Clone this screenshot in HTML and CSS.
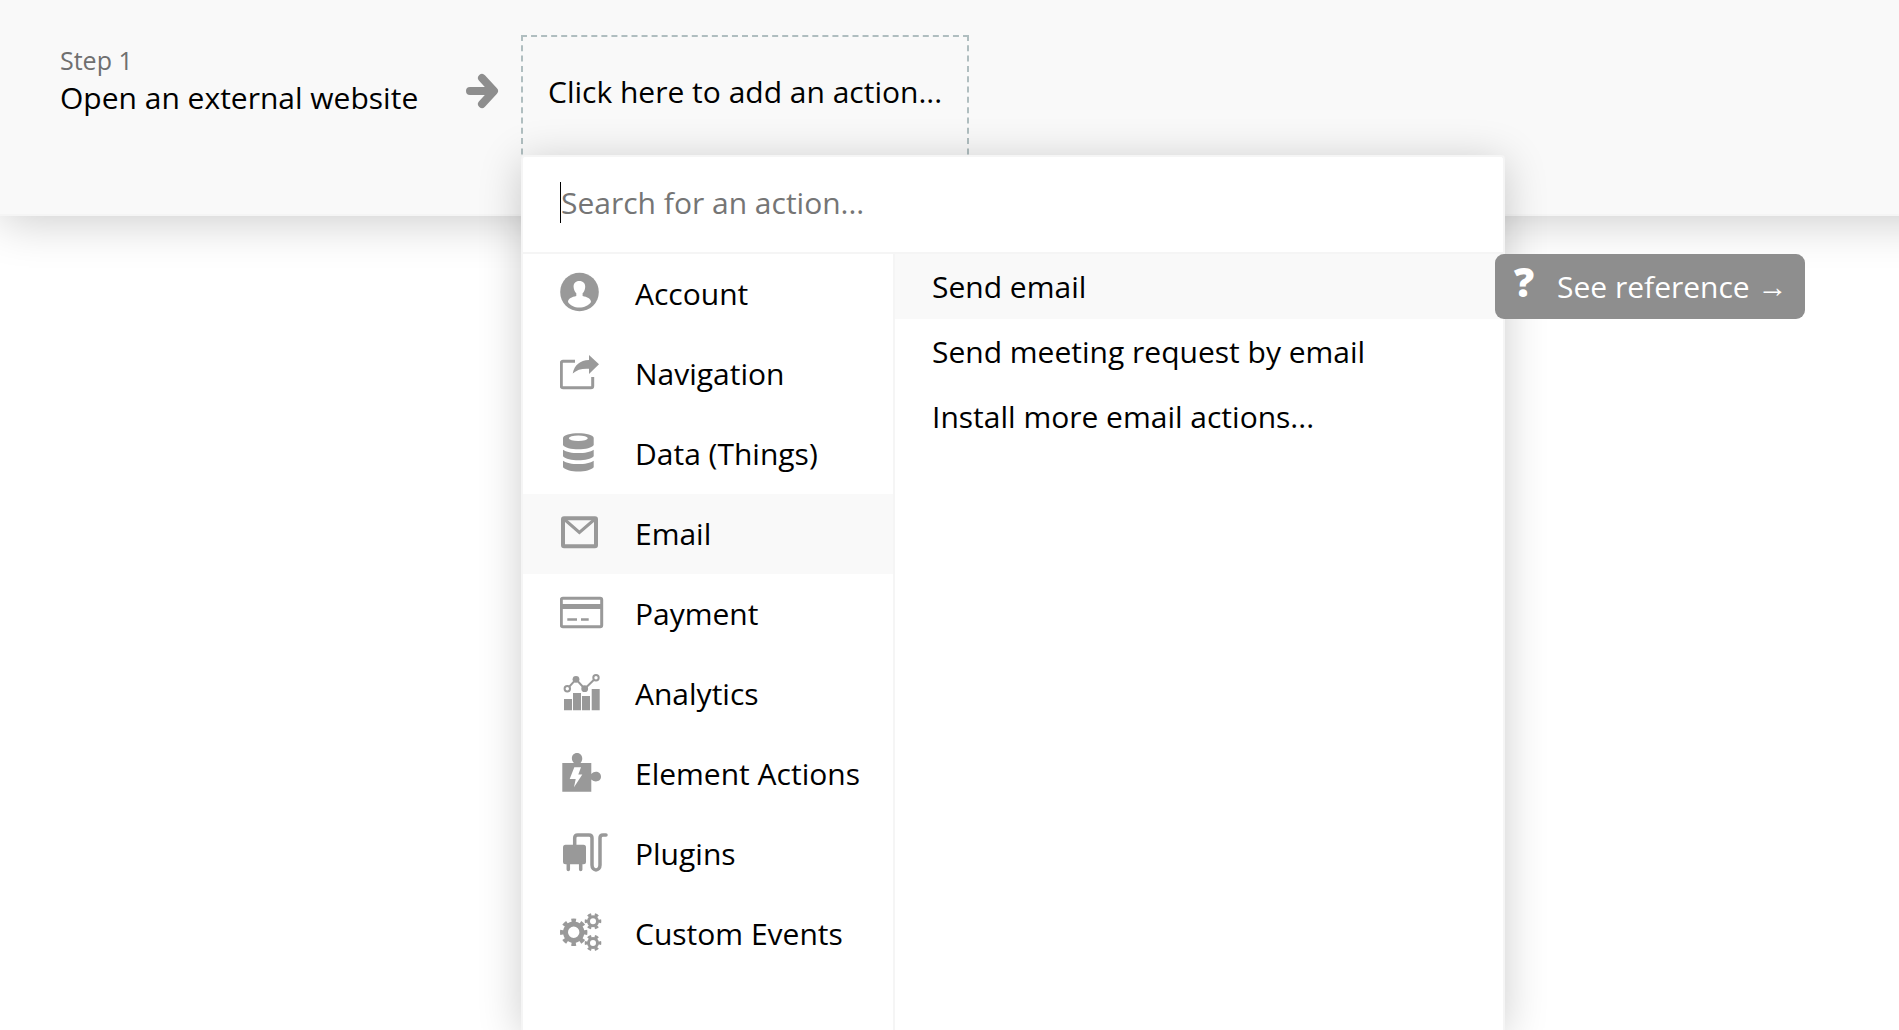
FILE: index.html
```html
<!DOCTYPE html>
<html lang="en">
<head>
    <meta charset="UTF-8">
    <meta name="viewport" content="width=device-width, initial-scale=1.0">
    <title>Workflow</title>
    <link rel="stylesheet" href="styles.css">
</head>
<body>
    <header class="workflow">
        <div class="step">
            <div class="step-number">Step 1</div>
            <div class="step-name">Open an external website</div>
        </div>

        <svg class="step-arrow" viewBox="0 0 34 36">
            <path d="M5 18H27M17 5L29 18L17 31" fill="none" stroke="#8e8e8e" stroke-width="8" stroke-linecap="round" stroke-linejoin="round"/>
        </svg>

        <div class="add-action">
            <button type="button" class="add-button">Click here to add an action...</button>

            <div class="menu">
                <div class="search">
                    <input type="text" class="search-input" aria-label="Search for an action" placeholder="Search for an action...">
                </div>

                <div class="menu-columns">
                    <nav class="categories">
                        <button type="button" class="category">
                            <svg class="icon" viewBox="0 0 48 44">
                                <circle cx="19.5" cy="20" r="19.3"/>
                                <path class="cut" d="M19.3 9C15.5 9 13.4 11.5 13.6 15C13.8 18 15 20 16.3 21.3V24C12 25 8 26.5 8 30C10 33.5 14.5 35.5 19.3 35.5S29 33.5 31 30C31 26.5 27 25 22.6 24V21.3C24 20 25 18 25.2 15C25.4 11.5 23.2 9 19.3 9Z"/>
                            </svg>
                            Account
                        </button>
                        <button type="button" class="category">
                            <svg class="icon" viewBox="0 0 48 44">
                                <path class="line" d="M15 9.3H3Q1.3 9.3 1.3 11V34Q1.3 35.7 3 35.7H31Q32.7 35.7 32.7 34V25"/>
                                <path d="M29 3L39 12.3L29 22V16.7C22 16.3 17 17.5 12.7 21.5C14.5 13 20 8.3 29 8Z"/>
                            </svg>
                            Navigation
                        </button>
                        <button type="button" class="category">
                            <svg class="icon" viewBox="0 0 48 44">
                                <path d="M3 6C3 -.5 33.7 -.5 33.7 6V13C31 18.7 5.7 18.7 3 13Z"/>
                                <ellipse class="cut" cx="18.3" cy="6.2" rx="9.5" ry="2.8"/>
                                <path d="M3 17.7C9 22.2 27.7 22.2 33.7 17.7V24.3C29 29.7 7.7 29.7 3 24.3ZM3 28.7C9 33.2 27.7 33.2 33.7 28.7V35.3C29 41 7.7 41 3 35.3Z"/>
                            </svg>
                            Data (Things)
                        </button>
                        <button type="button" class="category active">
                            <svg class="icon" viewBox="0 0 48 44">
                                <rect class="line thick" x="3" y="6.2" width="33" height="28" rx="1"/>
                                <path class="line" d="M4 7L19.4 20.5L35 7"/>
                            </svg>
                            Email
                        </button>
                        <button type="button" class="category">
                            <svg class="icon" viewBox="0 0 48 44">
                                <rect class="line" x="1.3" y="6.3" width="40.4" height="28.4" rx="1.5"/>
                                <path d="M1 12H42V17H1ZM7.3 26.2H17V28.8H7.3ZM21 26.2H28.7V28.8H21Z"/>
                            </svg>
                            Payment
                        </button>
                        <button type="button" class="category">
                            <svg class="icon" viewBox="0 0 48 44">
                                <path d="M4 27H12V38.3H4ZM13 21H21V38.3H13ZM22 24H30V38.3H22ZM31.7 17H39.7V38.3H31.7Z"/>
                                <circle class="line thin" cx="7.3" cy="16.7" r="2.7"/>
                                <circle class="line thin" cx="36" cy="5.7" r="2.7"/>
                                <circle cx="16" cy="7.3" r="3.4"/>
                                <circle cx="24.7" cy="16.7" r="3.4"/>
                                <path class="line thin" d="M9.3 14.7L16 7.3L24.7 16.7L34 7.7"/>
                            </svg>
                            Analytics
                        </button>
                        <button type="button" class="category">
                            <svg class="icon" viewBox="0 0 48 44">
                                <path d="M2.3 11H14C10 7 12 1 17 1S24 7 20.5 11H31.3V22C35 18 41 20 41 24.7S35 31 31.3 27.5V39.7H2.3Z"/>
                                <path class="cut" d="M14.3 15.3H21L18.3 22.5H22.3L14 35.3L15.7 27H9.7Z"/>
                            </svg>
                            Element Actions
                        </button>
                        <button type="button" class="category">
                            <svg class="icon" viewBox="0 0 48 44">
                                <rect x="3" y="12.7" width="23" height="19.6" rx="2.5"/>
                                <path class="line round" d="M8.3 31V37.5M20.7 31V37.5M14.7 14V6Q14.7 3 17.7 3H29Q32 3 32 6V33C32 39.5 40 39.5 40 33V6Q40 3 43 3H46"/>
                            </svg>
                            Plugins
                        </button>
                        <button type="button" class="category">
                            <svg class="icon" viewBox="0 0 48 44">
                                <circle class="line ring" cx="13.7" cy="20.3" r="8.2"/>
                                <circle class="line teeth" cx="13.7" cy="20.3" r="11.7" pathLength="16"/>
                                <circle class="line" cx="33" cy="9.3" r="4.5"/>
                                <circle class="line teeth" cx="33" cy="9.3" r="6.3" pathLength="12"/>
                                <circle class="line" cx="33" cy="31" r="4.5"/>
                                <circle class="line teeth" cx="33" cy="31" r="6.3" pathLength="12"/>
                            </svg>
                            Custom Events
                        </button>
                    </nav>

                    <div class="actions">
                        <div class="action-row active">
                            <button type="button" class="action">Send email</button>
                            <a href="#" class="reference"><span class="question">?</span>See reference&nbsp;<span class="arrow">→</span></a>
                        </div>
                        <div class="action-row">
                            <button type="button" class="action">Send meeting request by email</button>
                        </div>
                        <div class="action-row">
                            <button type="button" class="action">Install more email actions...</button>
                        </div>
                    </div>
                </div>
            </div>
        </div>
    </header>
</body>
</html>
```
FILE: styles.css
```css
* {
    box-sizing: border-box;
}

body {
    margin: 0;
    height: 100vh;
    overflow: hidden;
    background: #fff;
    color: #000;
    font-family: "Open Sans", "Noto Sans", sans-serif;
    font-size: 30px;
    line-height: 40px;
}

button,
input {
    margin: 0;
    padding: 0;
    border: 0;
    background: none;
    color: inherit;
    font: inherit;
    text-align: left;
}

button {
    cursor: pointer;
}

/* runs past the right edge so the shadow does not fade there */
.workflow {
    display: flex;
    align-items: flex-start;
    width: calc(100% + 60px);
    height: 216px;
    padding: 35px 60px 0;
    background: #f9f9f9;
    border-bottom: 2px solid #f5f5f5;
    box-shadow: 0 6px 44px rgba(0, 0, 0, 0.2);
}

.step {
    width: 405px;
    padding-top: 8px;
    white-space: nowrap;
}

.step-number {
    color: #6f6f6f;
    font-size: 25px;
    line-height: 35px;
}

.step-arrow {
    flex: none;
    width: 34px;
    height: 36px;
    margin: 38px 22px 0 0;
}

.add-action {
    position: relative;
}

.add-button {
    display: block;
    width: 448px;
    height: 140px;
    padding: 0 0 26px 25px;
    border: 2px dashed #b0bec0;
    white-space: nowrap;
}

.menu {
    position: absolute;
    top: 120px;
    left: 0;
    display: flex;
    flex-direction: column;
    width: 984px;
    height: calc(100vh - 155px);
    background: #fff;
    border: 2px solid #f5f5f5;
    border-bottom: 0;
    border-radius: 4px 4px 0 0;
    box-shadow: 0 6px 44px rgba(0, 0, 0, 0.2);
}

.search {
    display: flex;
    align-items: center;
    height: 97px;
    padding: 0 37px 4px;
    border-bottom: 2px solid #f5f5f5;
}

/* text cursor */
.search::before {
    content: "";
    width: 1px;
    height: 41px;
    background: #000;
}

.search-input {
    flex: 1;
    outline: none;
}

.search-input::placeholder {
    color: #757575;
    opacity: 1;
}

.menu-columns {
    display: flex;
    flex: 1;
}

.categories {
    width: 372px;
    border-right: 2px solid #f5f5f5;
}

.category {
    display: flex;
    align-items: center;
    gap: 27px;
    width: 100%;
    height: 80px;
    padding-left: 37px;
    white-space: nowrap;
}

.active {
    background: #f9f9f9;
}

.icon {
    flex: none;
    width: 48px;
    height: 44px;
    fill: #999;
    stroke: none;
}

.icon .cut {
    fill: #fff;
}

.icon .line {
    fill: none;
    stroke: #999;
    stroke-width: 3;
}

.icon .thick {
    stroke-width: 4;
}

.icon .thin {
    stroke-width: 2;
}

.icon .round {
    stroke-width: 3.5;
    stroke-linecap: round;
}

.icon .ring {
    stroke-width: 5;
}

.icon .teeth {
    stroke-width: 4;
    stroke-dasharray: 1 1;
    stroke-dashoffset: 0.5;
}

.actions {
    flex: 1;
}

.action-row {
    position: relative;
}

.action {
    display: block;
    width: 100%;
    height: 65px;
    padding-left: 37px;
}

.reference {
    position: absolute;
    top: 0;
    left: 600px;
    display: flex;
    align-items: center;
    width: 310px;
    height: 65px;
    padding-left: 19px;
    border-radius: 9px;
    background: #8e8e8e;
    color: #fff;
    text-decoration: none;
    white-space: nowrap;
}

.question {
    width: 43px;
    padding-bottom: 10px;
    font-size: 40px;
    font-weight: 800;
}

.arrow {
    font-family: "Liberation Serif", "Times New Roman", serif;
}
```
